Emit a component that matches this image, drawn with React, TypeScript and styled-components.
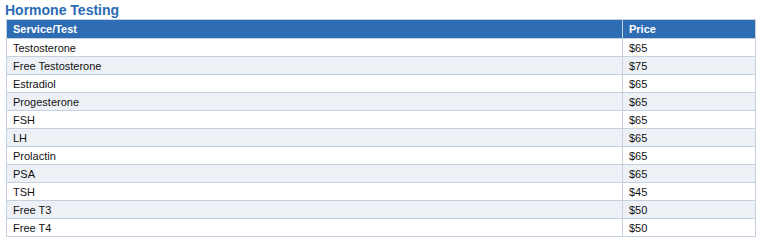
import React from 'react'
import styled, { createGlobalStyle } from 'styled-components'

type Row = { name: string; price: string }

const rows: Row[] = [
  { name: 'Testosterone', price: '$65' },
  { name: 'Free Testosterone', price: '$75' },
  { name: 'Estradiol', price: '$65' },
  { name: 'Progesterone', price: '$65' },
  { name: 'FSH', price: '$65' },
  { name: 'LH', price: '$65' },
  { name: 'Prolactin', price: '$65' },
  { name: 'PSA', price: '$65' },
  { name: 'TSH', price: '$45' },
  { name: 'Free T3', price: '$50' },
  { name: 'Free T4', price: '$50' },
]

const GlobalStyle = createGlobalStyle`
  body {
    margin: 0;
    background: #ffffff;
    font-family: 'Liberation Sans', Arial, sans-serif;
  }
`

const Wrapper = styled.div`
  padding: 2px 8px 0 6px;
`

const Heading = styled.h2`
  margin: 0 0 1px -1px;
  font-size: 14px;
  line-height: 16px;
  font-weight: bold;
  color: #2b6bb4;
`

const Table = styled.table`
  width: 750px;
  border-collapse: collapse;
  font-size: 11px;
`

const HeadCell = styled.th<{ $width?: number }>`
  background: #2e6cb3;
  color: #ffffff;
  font-weight: bold;
  text-align: left;
  height: 18px;
  padding: 0 6px;
  border: 1px solid #c5d1df;
  width: ${({ $width }) => ($width ? `${$width}px` : 'auto')};
`

const BodyRow = styled.tr<{ $striped: boolean }>`
  background: ${({ $striped }) => ($striped ? '#edf1f6' : '#ffffff')};
`

const Cell = styled.td`
  color: #111111;
  height: 17px;
  padding: 0 6px;
  border: 1px solid #c5d1df;
`

const App = () => {
  return (
    <Wrapper>
      <GlobalStyle />
      <Heading>Hormone Testing</Heading>
      <Table>
        <thead>
          <tr>
            <HeadCell>Service/Test</HeadCell>
            <HeadCell $width={120}>Price</HeadCell>
          </tr>
        </thead>
        <tbody>
          {rows.map((row, i) => (
            <BodyRow key={row.name} $striped={i % 2 === 1}>
              <Cell>{row.name}</Cell>
              <Cell>{row.price}</Cell>
            </BodyRow>
          ))}
        </tbody>
      </Table>
    </Wrapper>
  )
}

export default App
